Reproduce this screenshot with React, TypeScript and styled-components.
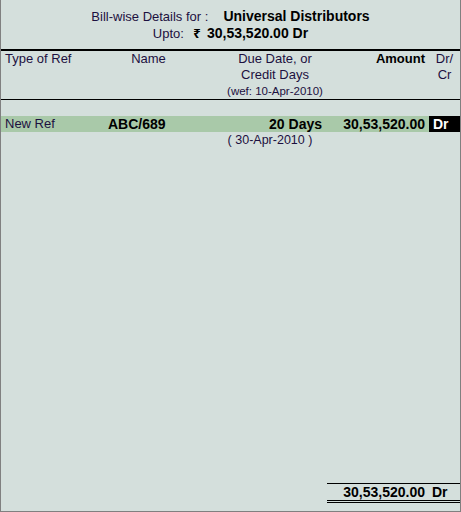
import React from "react";
import styled, { createGlobalStyle } from "styled-components";

const GlobalStyle = createGlobalStyle`
  body {
    margin: 0;
    background: #d4dfdc;
    font-family: "Liberation Sans", Arial, "DejaVu Sans", sans-serif;
  }
`;

// type | name | due date | amount | dr/cr
const COLS = "100px 95px 142px 91px 31px";

const Panel = styled.div`
  width: 461px;
  height: 512px;
  box-sizing: border-box;
  background: #d4dfdc;
  border: 1px solid #808080;
  border-top: none;
  display: flex;
  flex-direction: column;
  color: #1c1040;
  font-size: 13px;
  line-height: 16px;
`;

const Title = styled.div`
  height: 51px;
  box-sizing: border-box;
  padding-top: 8px;
  text-align: center;
  border-bottom: 2px solid #000;
`;

const TitleLine = styled.div`
  white-space: nowrap;
`;

const Strong = styled.span<{ $gap: number }>`
  font-weight: bold;
  font-size: 14px;
  color: #000;
  margin-left: ${(p) => p.$gap}px;
`;

const Rupee = styled.span`
  display: inline-block;
  width: 8px;
  margin-right: 6px;
  font-family: "Noto Sans", "DejaVu Sans", sans-serif;
  font-weight: bold;
  font-size: 13px;
  text-align: center;
`;

const HeaderGrid = styled.div`
  display: grid;
  grid-template-columns: ${COLS};
  height: 48px;
  border-bottom: 1px solid #000;
`;

const HeadCell = styled.div<{ $align?: string; $bold?: boolean; $pad?: string }>`
  text-align: ${(p) => p.$align || "left"};
  padding: ${(p) => p.$pad || "0"};
  font-weight: ${(p) => (p.$bold ? "bold" : "normal")};
  color: ${(p) => (p.$bold ? "#000" : "inherit")};
  white-space: nowrap;
`;

const Small = styled.div`
  font-size: 11.5px;
`;

const Body = styled.div`
  flex: 1;
  padding-top: 16px;
`;

const Row = styled.div`
  display: grid;
  grid-template-columns: ${COLS};
  height: 16px;
  background: #a9c9a9;
`;

const Cell = styled.div<{ $align?: string; $bold?: boolean; $pad?: string }>`
  text-align: ${(p) => p.$align || "left"};
  padding: ${(p) => p.$pad || "0"};
  font-weight: ${(p) => (p.$bold ? "bold" : "normal")};
  font-size: ${(p) => (p.$bold ? "14px" : "13px")};
  color: ${(p) => (p.$bold ? "#000" : "inherit")};
  white-space: nowrap;
`;

const DrBox = styled.div`
  background: #000;
  color: #fff;
  font-weight: bold;
  font-size: 14px;
  padding-left: 4px;
`;

const SubRow = styled.div`
  display: grid;
  grid-template-columns: ${COLS};
  height: 16px;
`;

const DateNote = styled.div`
  font-size: 12.5px;
  text-align: center;
  padding-left: 6px;
  white-space: pre;
`;

const Footer = styled.div`
  margin-left: auto;
  margin-bottom: 8px;
  width: 133px;
  display: flex;
  border-top: 1px solid #000;
  border-bottom: 3px double #000;
  font-weight: bold;
  font-size: 14px;
  color: #000;
`;

const TotalAmount = styled.div`
  flex: 1;
  text-align: right;
  padding-right: 4px;
`;

const TotalDr = styled.div`
  width: 31px;
  padding-left: 3px;
  box-sizing: border-box;
`;

export default function App() {
  return (
    <>
      <GlobalStyle />
      <Panel>
        <Title>
          <TitleLine>
            Bill-wise Details for :<Strong $gap={15}>Universal Distributors</Strong>
          </TitleLine>
          <TitleLine>
            Upto:
            <Strong $gap={9}>
              <Rupee>₹</Rupee>30,53,520.00 Dr
            </Strong>
          </TitleLine>
        </Title>
        <HeaderGrid>
          <HeadCell $pad="0 0 0 4px">Type of Ref</HeadCell>
          <HeadCell $align="center">Name</HeadCell>
          <HeadCell $align="center" $pad="0 0 0 16px">
            <div>Due Date, or</div>
            <div>Credit Days</div>
            <Small>(wef: 10-Apr-2010)</Small>
          </HeadCell>
          <HeadCell $align="right" $bold $pad="0 4px 0 0">
            Amount
          </HeadCell>
          <HeadCell $align="center">
            <div>Dr/</div>
            <div>Cr</div>
          </HeadCell>
        </HeaderGrid>
        <Body>
          <Row>
            <Cell $pad="0 0 0 4px">New Ref</Cell>
            <Cell $bold $pad="0 0 0 7px">
              ABC/689
            </Cell>
            <Cell $bold $align="right" $pad="0 16px 0 0">
              20 Days
            </Cell>
            <Cell $bold $align="right" $pad="0 4px 0 0">
              30,53,520.00
            </Cell>
            <DrBox>Dr</DrBox>
          </Row>
          <SubRow>
            <div />
            <div />
            <DateNote>( 30-Apr-2010 )</DateNote>
          </SubRow>
        </Body>
        <Footer>
          <TotalAmount>30,53,520.00</TotalAmount>
          <TotalDr>Dr</TotalDr>
        </Footer>
      </Panel>
    </>
  );
}
